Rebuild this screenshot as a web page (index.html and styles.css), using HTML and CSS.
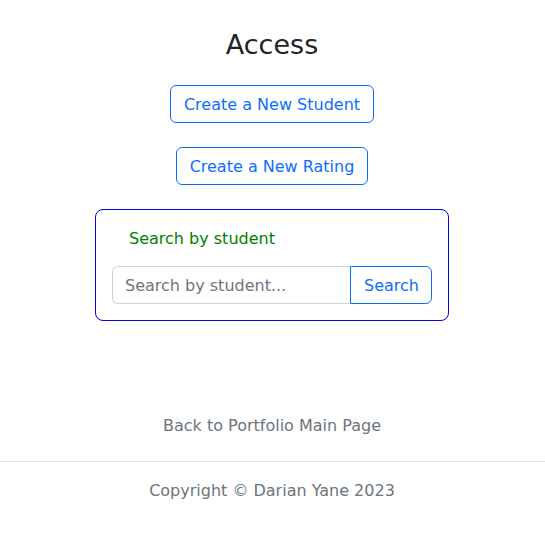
FILE: index.html
```html
<!DOCTYPE html>
<html lang="en">
<head>
<meta charset="utf-8">
<title>Access</title>
<link rel="stylesheet" href="styles.css">
</head>
<body>
<main class="page">
  <h1 class="title">Access</h1>
  <div class="actions">
    <a class="btn-outline" href="#">Create a New Student</a>
    <a class="btn-outline" href="#">Create a New Rating</a>
  </div>
  <form class="search-card">
    <label class="search-label" for="q">Search by student</label>
    <div class="input-group">
      <input id="q" class="search-input" type="text" placeholder="Search by student...">
      <button class="search-btn" type="button">Search</button>
    </div>
  </form>
  <a class="back-link" href="#">Back to Portfolio Main Page</a>
</main>
<footer class="footer">
  <p class="copyright">Copyright © Darian Yane 2023</p>
</footer>
</body>
</html>
```
FILE: styles.css
```css
* { box-sizing: border-box; }
html, body { margin: 0; padding: 0; background: #fff; }
body {
  font-family: "DejaVu Sans", Verdana, sans-serif;
  font-size: 16px;
  line-height: 1.5;
  color: #212529;
}
.page {
  display: flex;
  flex-direction: column;
  align-items: center;
  padding-top: 28px;
  padding-right: 1px;
}
.title {
  margin: 0 0 25px;
  padding-top: 1px;
  height: 32px;
  font-size: 27px;
  font-weight: 400;
  line-height: 32px;
  color: #212529;
}
.actions {
  display: flex;
  flex-direction: column;
  align-items: center;
  gap: 24px;
}
.btn-outline {
  display: inline-block;
  padding: 7px 13px 5px;
  border: 1px solid #0d6efd;
  border-radius: 6px;
  color: #0d6efd;
  text-decoration: none;
  line-height: 24px;
  font-size: 16px;
}
.search-card {
  margin-top: 24px;
  width: 354px;
  padding: 16px;
  border: 1px solid #0000ff;
  border-radius: 8px;
  display: flex;
  flex-direction: column;
}
.search-label {
  padding-left: 17px;
  padding-top: 1px;
  height: 24px;
  color: #008000;
  line-height: 24px;
  margin-bottom: 16px;
}
.input-group {
  display: flex;
  height: 38px;
}
.search-input {
  flex: 1;
  min-width: 0;
  font: inherit;
  padding: 7px 12px 5px;
  border: 1px solid #ced4da;
  border-right: none;
  border-radius: 6px 0 0 6px;
  color: #212529;
  outline: none;
}
.search-input::placeholder { color: #6c757d; opacity: 1; }
.search-btn {
  font: inherit;
  background: #fff;
  color: #0d6efd;
  border: 1px solid #0d6efd;
  border-radius: 0 6px 6px 0;
  padding: 7px 12px 5px 13px;
  line-height: 24px;
}
.back-link {
  margin-top: 93px;
  margin-bottom: -1px;
  color: #6c757d;
  text-decoration: none;
  line-height: 24px;
}
.footer {
  margin-top: 24px;
  border-top: 1px solid #dee2e6;
  text-align: center;
  padding-top: 17px;
  padding-right: 1px;
}
.copyright {
  margin: 0;
  color: #6c757d;
  line-height: 24px;
}
```
